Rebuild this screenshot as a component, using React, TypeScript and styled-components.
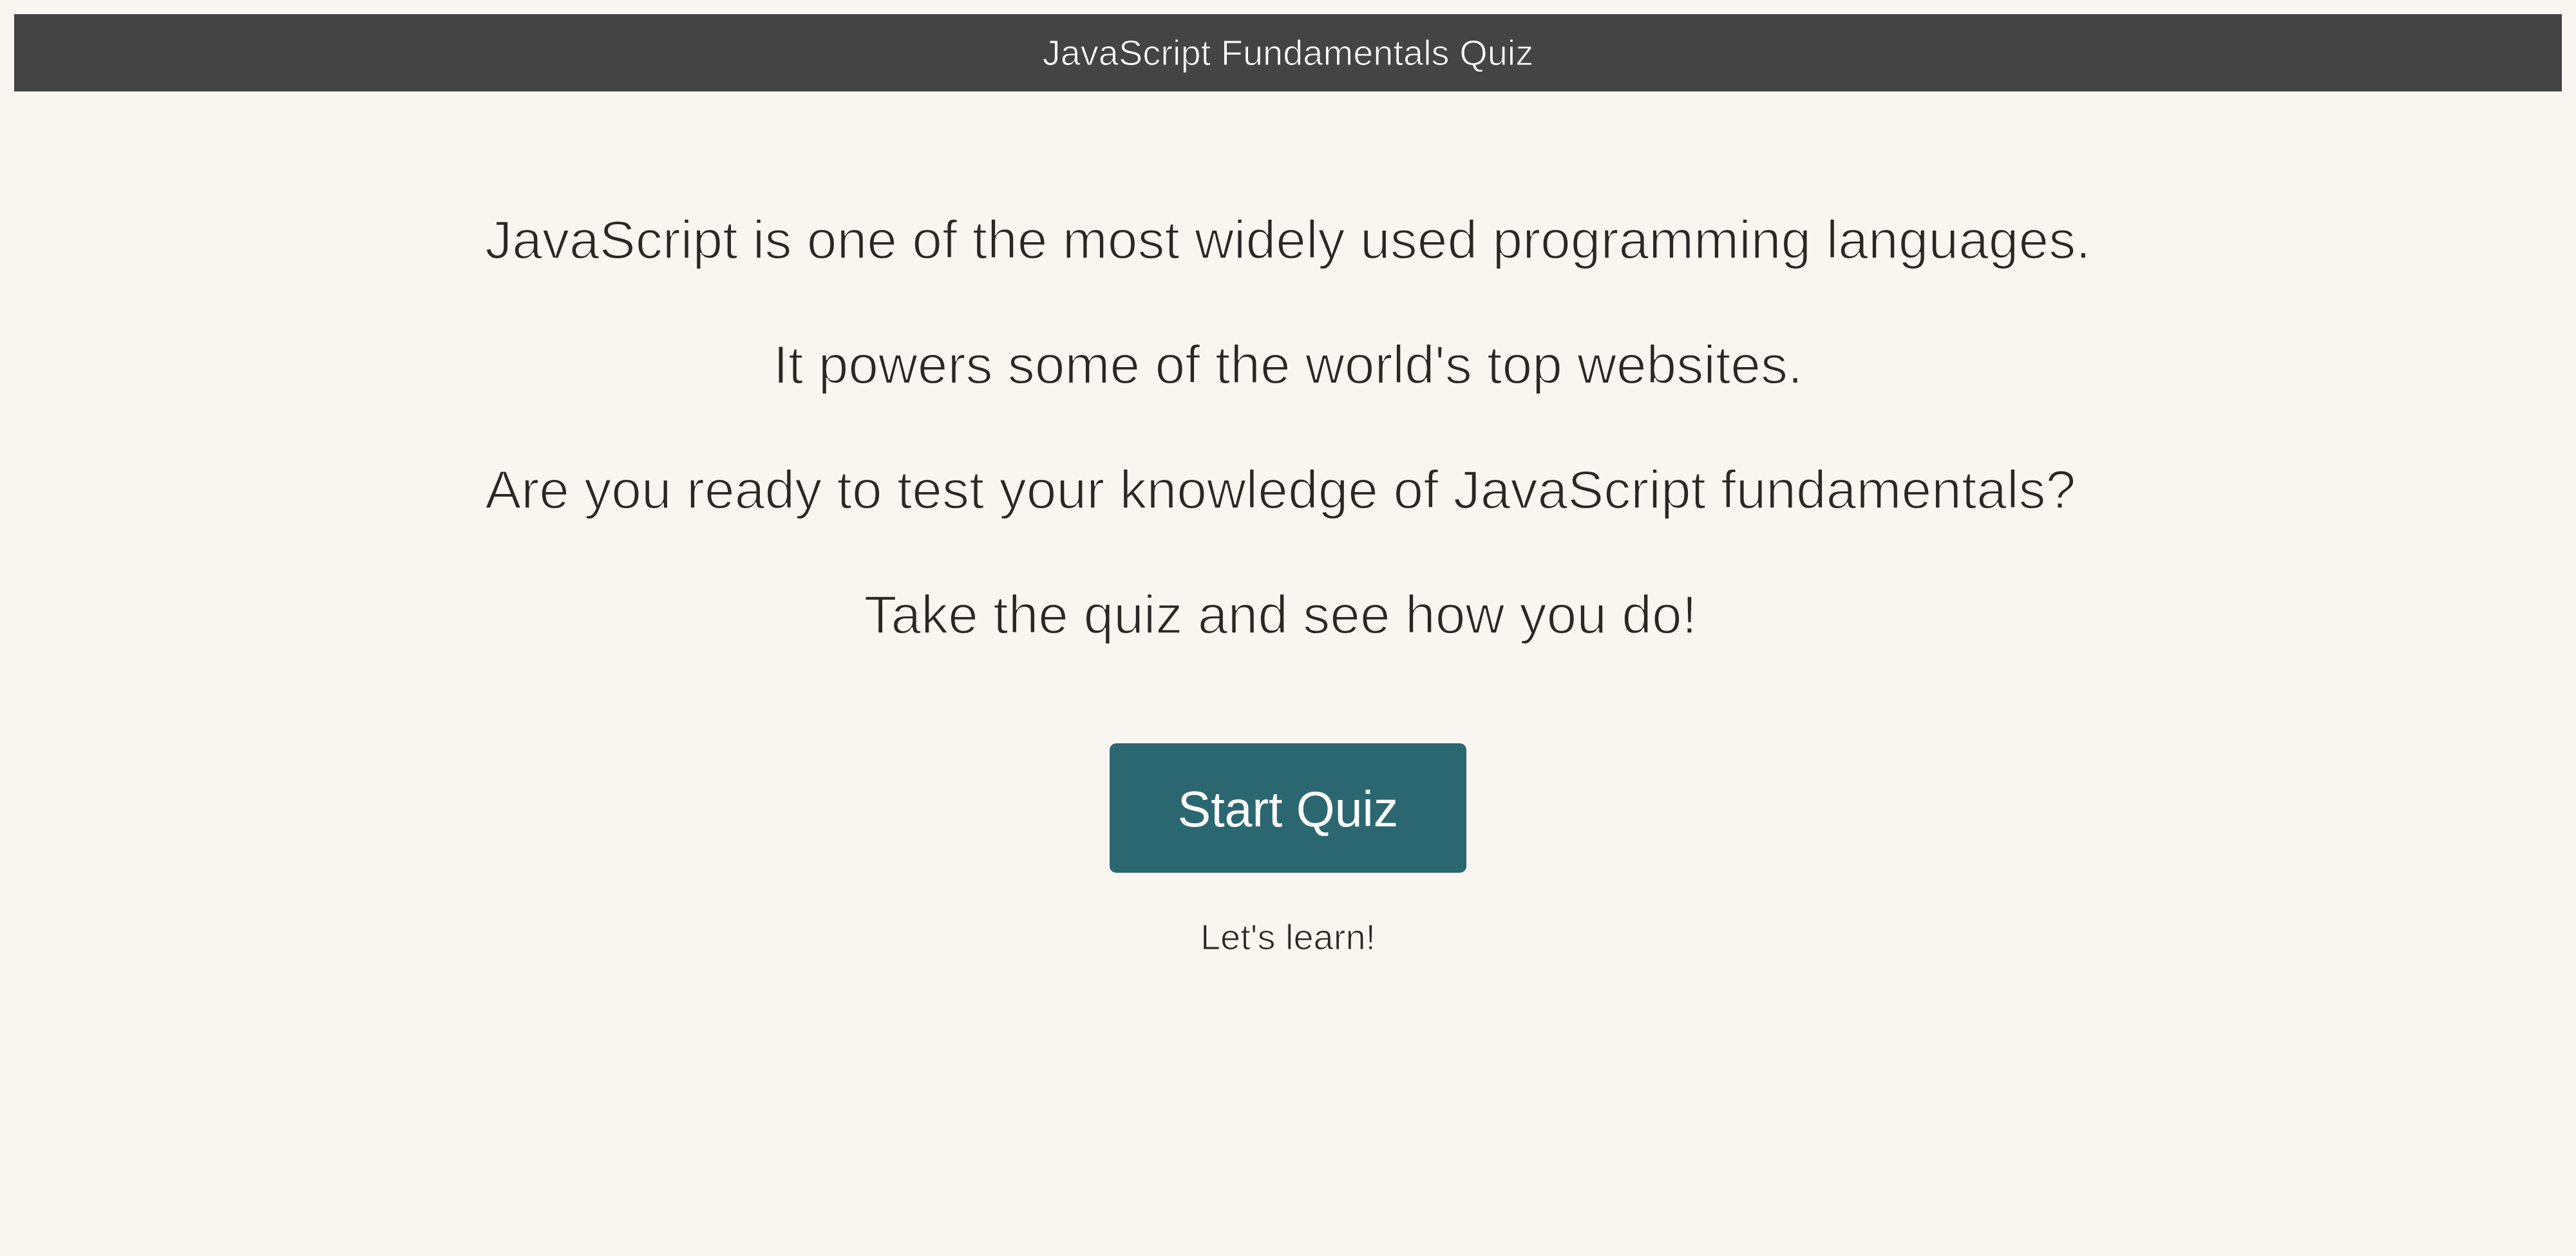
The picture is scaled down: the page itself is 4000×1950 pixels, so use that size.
import React from "react";
import styled, { createGlobalStyle } from "styled-components";

const BG = "#f9f6f1";
const BAR = "#444444";
const INK = "#2a2725";

const GlobalStyle = createGlobalStyle`
  html, body {
    margin: 0;
    padding: 0;
    background: ${BG};
  }
  body {
    font-family: "Liberation Sans", Arial, Helvetica, sans-serif;
    color: ${INK};
  }
`;

const Page = styled.div`
  min-height: 1950px;
  box-sizing: border-box;
  padding: 22px;
  display: flex;
  flex-direction: column;
  align-items: stretch;
`;

const Header = styled.header`
  height: 120px;
  background: ${BAR};
  color: #ffffff;
  font-size: 56px;
  line-height: 120px;
  text-align: center;
  -webkit-text-stroke: 1.2px ${BAR};
`;

const Main = styled.main`
  display: flex;
  flex-direction: column;
  align-items: center;
  padding-top: 180px;
`;

const Intro = styled.p`
  margin: 0;
  font-size: 84px;
  line-height: 100px;
  text-align: center;
  white-space: pre;
  color: ${INK};
  -webkit-text-stroke: 2px ${BG};
  & + & {
    margin-top: 94px;
  }
`;

const StartButton = styled.button`
  margin-top: 150px;
  box-sizing: border-box;
  padding: 64px 106px 60px;
  border: none;
  border-radius: 10px;
  background: #2b6770;
  color: #ffffff;
  font-family: "Liberation Sans", Arial, Helvetica, sans-serif;
  font-size: 77px;
  line-height: 77px;
  cursor: pointer;
`;

const Note = styled.p`
  margin: 68px 0 0;
  font-size: 56px;
  line-height: 64px;
  text-align: center;
  color: ${INK};
  -webkit-text-stroke: 1.2px ${BG};
`;

const lines = [
  "JavaScript is one of the most widely used programming languages.",
  "It powers some of the world's top websites.",
  "Are you ready to test your knowledge of JavaScript fundamentals?\u00a0",
  "Take the quiz and see how you do!\u00a0",
];

export default function App() {
  return (
    <>
      <GlobalStyle />
      <Page>
        <Header>JavaScript Fundamentals Quiz</Header>
        <Main>
          {lines.map((l) => (
            <Intro key={l}>{l}</Intro>
          ))}
          <StartButton type="button">Start Quiz</StartButton>
          <Note>Let's learn!</Note>
        </Main>
      </Page>
    </>
  );
}
